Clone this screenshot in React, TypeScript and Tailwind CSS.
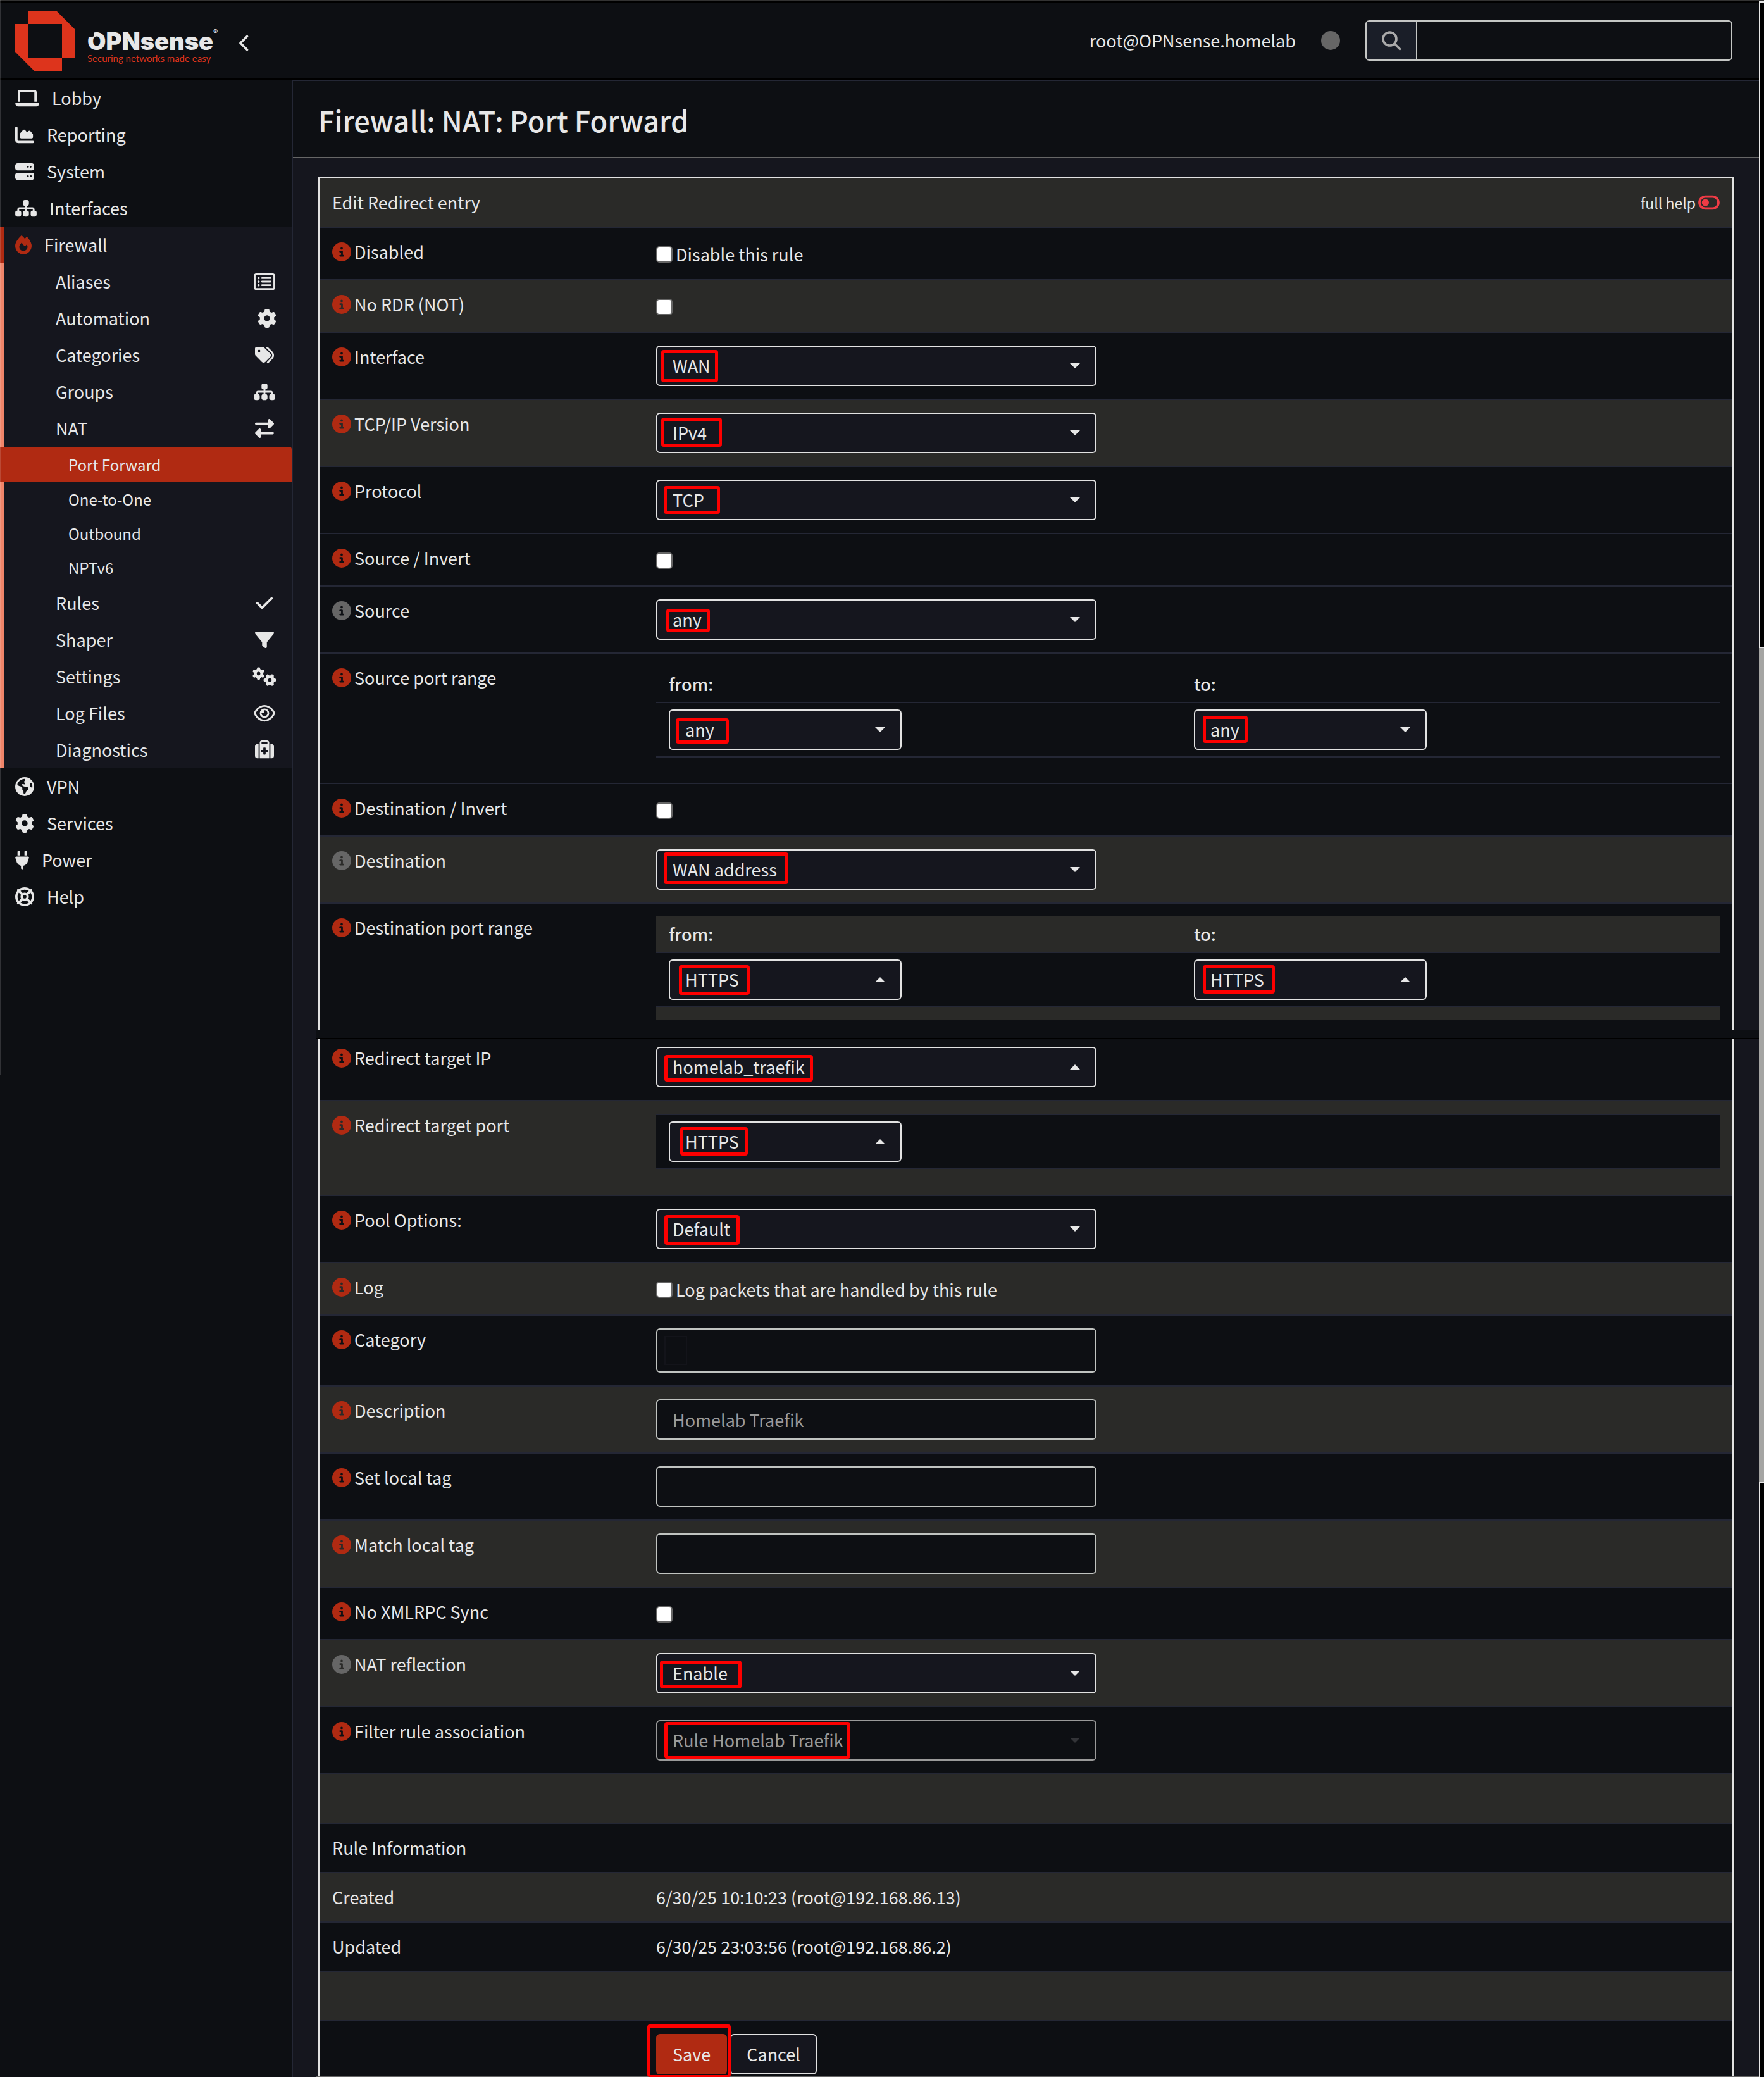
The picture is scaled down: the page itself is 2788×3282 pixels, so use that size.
import type { ReactNode } from "react";
import type { IconType } from "react-icons";
import {
  FaChartArea,
  FaCheck,
  FaCircleInfo,
  FaEarthAmericas,
  FaFilter,
  FaFire,
  FaGear,
  FaGears,
  FaLaptop,
  FaLifeRing,
  FaPlug,
  FaRegEye,
  FaRegRectangleList,
  FaRightLeft,
  FaServer,
  FaSitemap,
  FaSuitcaseMedical,
  FaTags,
  FaToggleOff,
} from "react-icons/fa6";

type MenuEntry = { label: string; icon: IconType; width?: string };

const topMenu: MenuEntry[] = [
  { label: "Lobby", icon: FaLaptop, width: "w-[38px]" },
  { label: "Reporting", icon: FaChartArea },
  { label: "System", icon: FaServer },
  { label: "Interfaces", icon: FaSitemap, width: "w-[34px]" },
];

const firewallUpper: MenuEntry[] = [
  { label: "Aliases", icon: FaRegRectangleList, width: "w-[34px]" },
  { label: "Automation", icon: FaGear },
  { label: "Categories", icon: FaTags },
  { label: "Groups", icon: FaSitemap, width: "w-[34px]" },
  { label: "NAT", icon: FaRightLeft },
];

const firewallLower: MenuEntry[] = [
  { label: "Rules", icon: FaCheck },
  { label: "Shaper", icon: FaFilter },
  { label: "Settings", icon: FaGears, width: "w-[38px]" },
  { label: "Log Files", icon: FaRegEye, width: "w-[34px]" },
  { label: "Diagnostics", icon: FaSuitcaseMedical },
];

const bottomMenu: MenuEntry[] = [
  { label: "VPN", icon: FaEarthAmericas },
  { label: "Services", icon: FaGear },
  { label: "Power", icon: FaPlug, width: "w-[22px]" },
  { label: "Help", icon: FaLifeRing },
];

function TopItem({ label, icon: Icon, width = "w-[30px]" }: MenuEntry) {
  return (
    <a href="#" className="flex h-[58px] items-center gap-5 pl-6">
      <Icon className={`h-[30px] ${width}`} />
      {label}
    </a>
  );
}

function SubItem({ label, icon: Icon, width = "w-[30px]" }: MenuEntry) {
  return (
    <a href="#" className="flex h-[58px] items-center justify-between border-l-6 border-[#f0856a] pr-6 pl-[82px]">
      {label}
      <span className={label === "Automation" ? "" : "flex w-[38px] justify-center"}>
        <Icon className={`h-[30px] ${width}`} />
      </span>
    </a>
  );
}

function Sidebar() {
  return (
    <nav className="w-[461px] shrink-0">
      {topMenu.map((m) => (
        <TopItem key={m.label} {...m} />
      ))}
      <div className="bg-[#15161e]">
        <a href="#" className="flex h-[58px] items-center gap-5 border-l-6 border-[#b02a12] pl-[18px]">
          <FaFire className="h-[30px] w-[26px] text-[#b02a12]" />
          Firewall
        </a>
        {firewallUpper.map((m) => (
          <SubItem key={m.label} {...m} />
        ))}
        <div className="text-[24px] shadow-[inset_6px_0_0_#f0856a]">
          <a href="#" className="flex h-14 items-center rounded-tr-sm bg-[#b02a12] pl-[108px]">
            Port Forward
          </a>
          {["One-to-One", "Outbound", "NPTv6"].map((l) => (
            <a key={l} href="#" className="flex h-[54px] items-center pl-[108px]">
              {l}
            </a>
          ))}
        </div>
        {firewallLower.map((m) => (
          <SubItem key={m.label} {...m} />
        ))}
      </div>
      {bottomMenu.map((m) => (
        <TopItem key={m.label} {...m} />
      ))}
    </nav>
  );
}

function Header() {
  return (
    <header className="flex h-[124px] items-center border-t-2 border-b-2 border-black bg-[#0d0f13] pr-[42px]">
      <a href="#" className="flex items-center pl-6" aria-label="OPNsense">
        <svg viewBox="0 0 95 95" className="size-[95px]" fill="#dd341c">
          <path d="M21 0H65L95 30V74H74V21H21Z" />
          <path d="M0 21H20V74H74V95H30L0 65Z" />
        </svg>
        <span className="mt-[22px] ml-[19px] flex flex-col font-[Lato]">
          <span className="relative font-[Inter] text-[38px] leading-[34px] font-black">
            OPNsense
            <svg viewBox="0 0 12 12" className="absolute top-0.5 left-0 size-3">
              <path d="M0 0H11V7L6 9H0Z" fill="#0d0f13" />
            </svg>
            <sup className="absolute -top-1 left-full text-[11px] leading-3 font-normal">®</sup>
          </span>
          <span className="text-[15px] leading-5 text-[#dd341c]">Securing networks made easy</span>
        </span>
      </a>
      <button type="button" aria-label="Collapse menu" className="ml-10 pt-2">
        <svg viewBox="0 0 16 26" className="h-[26px] w-4" fill="none" stroke="#e7e7e7" strokeWidth="3.6" strokeLinecap="round" strokeLinejoin="round">
          <path d="M13.5 2.5L3 13L13.5 23.5" />
        </svg>
      </button>
      <div className="ml-auto flex items-center">
        <span>root@OPNsense.homelab</span>
        <span className="ml-10 size-[30px] rounded-full bg-[#666]" />
        <form className="ml-10 flex h-16 w-[580px] overflow-hidden rounded-md border-2 border-[#c4c6c4]">
          <button type="button" aria-label="Search" className="flex w-20 items-center justify-center border-r-2 border-[#c4c6c4] bg-[#1a1e28]">
            <svg viewBox="0 0 32 32" className="size-8" fill="none" stroke="#aaaaaa" strokeWidth="3.6" strokeLinecap="round">
              <circle cx="13.5" cy="13.5" r="10.5" />
              <path d="M21.5 21.5L29.5 29.5" />
            </svg>
          </button>
          <input aria-label="Search text" className="min-w-0 flex-1 bg-[#0d0f13] px-6 outline-none" />
        </form>
      </div>
    </header>
  );
}

function Mark({ className }: { className: string }) {
  return <span className={`pointer-events-none absolute rounded border-5 border-[#fe0000] ${className}`} />;
}

function Caret({ up = false, className }: { up?: boolean; className: string }) {
  return (
    <svg viewBox="0 0 16 8" className={`pointer-events-none absolute top-7 right-[26px] h-2 w-4 ${className}`}>
      <path d={up ? "M0 8L8 0L16 8Z" : "M0 0H16L8 8Z"} fill="currentColor" />
    </svg>
  );
}

type PickerProps = { id: string; value: string; mark: string; up?: boolean; narrow?: boolean; disabled?: boolean; label?: string };

function Picker({ id, value, mark, up, narrow, disabled, label }: PickerProps) {
  return (
    <div className={`relative h-16 ${narrow ? "w-[368px]" : "w-[696px]"}`}>
      <select
        id={id}
        disabled={disabled}
        aria-label={label}
        className={`size-full appearance-none rounded-md border-2 pl-6 opacity-100 outline-none ${
          disabled ? "border-[#9a9a9a] bg-[#0d0f13] text-[#9a9a9a]" : "border-[#e2e2e2] bg-[#15161e]"
        }`}
      >
        <option>{value}</option>
      </select>
      <Caret up={up} className={disabled ? "text-[#333438]" : "text-[#e7e7e7]"} />
      <Mark className={mark} />
    </div>
  );
}

function Check({ id, text }: { id: string; text?: string }) {
  return (
    <div className="flex h-11 items-center gap-[5px]">
      <input
        id={id}
        type="checkbox"
        className="size-[26px] appearance-none rounded-[5px] border-2 border-[#666] bg-white"
      />
      {text && <label htmlFor={id}>{text}</label>}
    </div>
  );
}

function TextBox({ id, value }: { id: string; value?: string }) {
  return (
    <input
      id={id}
      defaultValue={value}
      className="block h-16 w-[696px] rounded-md border-2 border-[#c0c3c0] bg-[#0d0f13] px-6 text-[#9a9a9a] outline-none"
    />
  );
}

function FieldLabel({ id, label, muted }: { id: string; label: string; muted?: boolean }) {
  return (
    <label htmlFor={id} className="flex h-9 items-center gap-[5px] leading-9">
      <FaCircleInfo className={`size-[30px] ${muted ? "text-[#666]" : "text-[#b02a12]"}`} />
      {label}
    </label>
  );
}

type RowProps = {
  id: string;
  label: string;
  children: ReactNode;
  shade?: boolean;
  muted?: boolean;
  pad?: string;
  short?: boolean;
};

const line = "border-b-2 border-[#242735]";

function Row({ id, label, children, shade, muted, pad = "pt-5 pb-5", short }: RowProps) {
  const cell = `${line} px-5 text-left align-top font-normal ${short ? "h-[83px] pt-5" : pad}`;
  return (
    <tr className={shade ? "bg-[#2a2a28]" : ""}>
      <th scope="row" className={`${cell} w-[512px]`}>
        <FieldLabel id={id} label={label} muted={muted} />
      </th>
      <td className={cell}>{children}</td>
    </tr>
  );
}

type RangeProps = { id: string; from: ReactNode; to: ReactNode; shade?: boolean };

function PortRange({ id, from, to, shade }: RangeProps) {
  const bg = shade ? "bg-[#2a2a28]" : "";
  return (
    <table id={id} className="w-full table-fixed border-separate border-spacing-0">
      <thead>
        <tr className={bg}>
          <th className={`${line} h-[58px] w-[830px] px-5 text-left font-medium`}>from:</th>
          <th className={`${line} px-5 text-left font-medium`}>to:</th>
        </tr>
      </thead>
      <tbody>
        <tr>
          <td className={`${line} px-5 py-[10px]`}>{from}</td>
          <td className={`${line} px-5 py-[10px]`}>{to}</td>
        </tr>
        <tr className={bg}>
          <td colSpan={2} className="h-5 p-0" />
        </tr>
      </tbody>
    </table>
  );
}

function InfoRow({ name, value, shade }: { name?: string; value?: string; shade?: boolean }) {
  return (
    <tr className={shade ? "bg-[#2a2a28]" : ""}>
      <td className={`${line} h-[78px] px-5`}>{name}</td>
      <td className={`${line} px-5`}>{value}</td>
    </tr>
  );
}

const panel = "mr-10 ml-10 border-x-2 border-[#e2e2e2] bg-[#0d0f13] shadow-[2px_0_0_#101215]";

function UpperPanel() {
  return (
    <div className={`${panel} mt-[30px] border-t-2`}>
      <table className="w-full border-separate border-spacing-0">
        <tbody>
          <tr className="bg-[#2a2a28]">
            <td className={`${line} h-[78px] w-[512px] px-5`}>Edit Redirect entry</td>
            <td className={`${line} px-5`}>
              <button type="button" className="ml-auto flex items-center gap-1 text-[23px]">
                full help
                <FaToggleOff className="h-[30px] w-[34px] text-[#ef3b45]" />
              </button>
            </td>
          </tr>
          <Row id="disabled" label="Disabled" short>
            <Check id="disabled" text="Disable this rule" />
          </Row>
          <Row id="nordr" label="No RDR (NOT)" shade short>
            <Check id="nordr" />
          </Row>
          <Row id="interface" label="Interface">
            <Picker id="interface" value="WAN" mark="left-2 top-[7px] h-[51px] w-[90px]" />
          </Row>
          <Row id="ipprotocol" label="TCP/IP Version" shade>
            <Picker id="ipprotocol" value="IPv4" mark="left-2 top-2 h-[46px] w-24" />
          </Row>
          <Row id="protocol" label="Protocol">
            <Picker id="protocol" value="TCP" mark="left-3 top-[10px] h-11 w-[89px]" />
          </Row>
          <Row id="srcnot" label="Source / Invert" short>
            <Check id="srcnot" />
          </Row>
          <Row id="src" label="Source" muted>
            <Picker id="src" value="any" mark="left-4 top-[15px] h-[37px] w-[69px]" />
          </Row>
          <Row id="srcbegin" label="Source port range">
            <PortRange
              id="srcports"
              from={<Picker id="srcbegin" value="any" narrow mark="left-[11px] top-[14px] h-10 w-[84px]" />}
              to={<Picker id="srcend" label="Source port to" value="any" narrow mark="left-[14px] top-[10px] h-[43px] w-[71px]" />}
            />
          </Row>
          <Row id="dstnot" label="Destination / Invert" short>
            <Check id="dstnot" />
          </Row>
          <Row id="dst" label="Destination" shade muted>
            <Picker id="dst" value="WAN address" mark="left-3 top-[5px] h-[50px] w-[197px]" />
          </Row>
          <tr>
            <th scope="row" className="w-[512px] px-5 pt-5 text-left align-top font-normal">
              <FieldLabel id="dstbegin" label="Destination port range" />
            </th>
            <td className="px-5 pt-5 pb-4">
              <PortRange
                id="dstports"
                shade
                from={<Picker id="dstbegin" value="HTTPS" narrow up mark="left-4 top-[9px] h-[47px] w-28" />}
                to={<Picker id="dstend" label="Destination port to" value="HTTPS" narrow up mark="left-[14px] top-[9px] h-[45px] w-[114px]" />}
              />
            </td>
          </tr>
        </tbody>
      </table>
    </div>
  );
}

function LowerPanel() {
  return (
    <div className={panel}>
      <table className="w-full border-separate border-spacing-0">
        <tbody>
          <Row id="target" label="Redirect target IP" pad="pt-3 pb-5">
            <Picker id="target" value="homelab_traefik" up mark="left-[13px] top-[13px] h-[42px] w-[235px]" />
          </Row>
          <Row id="localport" label="Redirect target port" shade pad="pt-5 pb-10">
            <div className="border-y-2 border-[#242735] bg-[#0d0f13] px-5 py-[10px]">
              <Picker id="localport" value="HTTPS" narrow up mark="left-[18px] top-[9px] h-[45px] w-[107px]" />
            </div>
          </Row>
          <Row id="pool" label="Pool Options:">
            <Picker id="pool" value="Default" mark="left-[13px] top-[10px] h-[47px] w-[119px]" />
          </Row>
          <Row id="log" label="Log" shade short>
            <Check id="log" text="Log packets that are handled by this rule" />
          </Row>
          <Row id="category" label="Category">
            <div className="flex h-[70px] w-[696px] items-center rounded-md border-2 border-[#c0c3c0] pl-[11px]">
              <input id="category" className="h-[46px] w-9 border-2 border-[#13141a] bg-[#0d0f13] outline-none" />
            </div>
          </Row>
          <Row id="descr" label="Description" shade>
            <TextBox id="descr" value="Homelab Traefik" />
          </Row>
          <Row id="tag" label="Set local tag">
            <TextBox id="tag" />
          </Row>
          <Row id="tagged" label="Match local tag" shade>
            <TextBox id="tagged" />
          </Row>
          <Row id="nosync" label="No XMLRPC Sync" short>
            <Check id="nosync" />
          </Row>
          <Row id="reflection" label="NAT reflection" shade muted>
            <Picker id="reflection" value="Enable" mark="left-[6px] top-3 h-11 w-[129px]" />
          </Row>
          <Row id="assoc" label="Filter rule association">
            <Picker id="assoc" value="Rule Homelab Traefik" disabled mark="left-[13px] top-[3px] h-[58px] w-[294px]" />
          </Row>
          <InfoRow shade />
          <InfoRow name="Rule Information" />
          <InfoRow name="Created" value="6/30/25 10:10:23 (root@192.168.86.13)" shade />
          <InfoRow name="Updated" value="6/30/25 23:03:56 (root@192.168.86.2)" />
          <InfoRow shade />
          <tr>
            <td />
            <td className="px-5 pt-5 pb-[3px]">
              <div className="relative flex gap-[5px]">
                <button type="button" className="h-16 rounded-md bg-[#b02a12] px-[26px]">
                  Save
                </button>
                <button type="button" className="h-16 rounded-md border-2 border-[#e2e2e2] bg-[#15161e] px-6">
                  Cancel
                </button>
                <Mark className="-top-[15px] -left-[14px] h-[83px] w-[132px] border-b-3" />
              </div>
            </td>
          </tr>
        </tbody>
      </table>
    </div>
  );
}

function ScrollTrack() {
  return (
    <div aria-hidden="true" className="flex w-2 shrink-0 flex-col">
      <div className="flex-[1020] border-y-2 border-l-2 border-[#e7e7e7] bg-black" />
      <div className="flex-[1320] bg-[#a5a5a3]" />
      <div className="flex-[940] border-t-2 border-l-2 border-[#e7e7e7] bg-black" />
    </div>
  );
}

export default function App() {
  return (
    <div className="relative flex min-h-screen flex-col overflow-hidden bg-[#0d0f13] font-['Noto_Sans_CJK_SC',sans-serif] text-[27px] leading-10 text-[#e7e7e7]">
      <div className="h-0.5 bg-[#333]" />
      <div className="flex flex-1">
        <div className="flex min-w-0 flex-1 flex-col">
          <Header />
          <div className="flex flex-1">
            <Sidebar />
            <main className="min-w-0 flex-1 border-t-2 border-l-2 border-[#242735] bg-[#15161e]">
              <div className="flex h-[122px] items-center border-b-2 border-[#666] bg-[#0d0f13] pt-1 pl-10">
                <h1 className="text-[45px] leading-[60px] font-medium">Firewall: NAT: Port Forward</h1>
              </div>
              <UpperPanel />
              <div className="ml-[37px] h-[14px] border-b-2 border-black bg-[#0d0f13]" />
              <LowerPanel />
              <div className="ml-[37px] h-px bg-[#666]" />
            </main>
          </div>
        </div>
        <ScrollTrack />
      </div>
      <div className="pointer-events-none absolute top-0 left-0 h-[1698px] w-0.5 bg-white/15" />
    </div>
  );
}
